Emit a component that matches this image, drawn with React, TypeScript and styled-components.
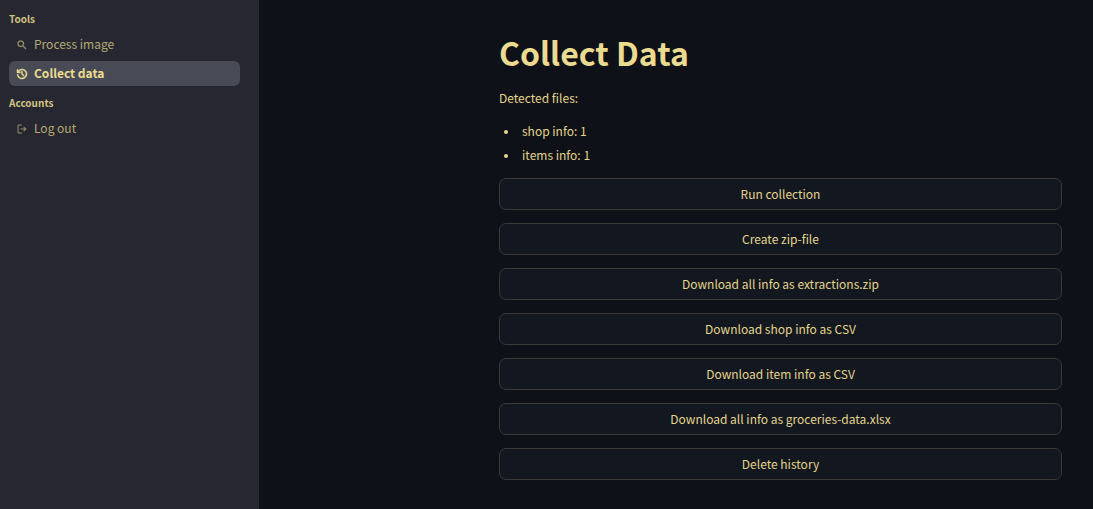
import React from "react";
import styled, { createGlobalStyle } from "styled-components";

const GlobalStyle = createGlobalStyle`
  *, *::before, *::after { box-sizing: border-box; }
  body {
    margin: 0;
    background: #0e1117;
    color: #e5d58c;
    font-family: "Source Sans Pro", "Noto Sans CJK SC", sans-serif;
    font-size: 12px;
    line-height: 24px;
  }
`;

const Shell = styled.div`
  display: flex;
  min-height: 100vh;
`;

const Sidebar = styled.nav`
  flex: 0 0 259px;
  padding: 9px 19px 9px 9px;
  background: #262730;
`;

const SectionTitle = styled.h2`
  margin: 0;
  font-size: 10px;
  line-height: 20px;
  font-weight: 700;
  color: #cfc283;
`;

const NavList = styled.ul`
  display: grid;
  gap: 4px;
  margin: 3px 0 7px;
  padding: 0;
  list-style: none;
`;

const NavLink = styled.a<{ $active?: boolean }>`
  display: flex;
  align-items: center;
  gap: 6px;
  height: 25px;
  padding: 0 7px 2px;
  border-radius: 6px;
  text-decoration: none;
  color: ${(p) => (p.$active ? "#eddd90" : "#b5aa76")};
  background: ${(p) => (p.$active ? "#484a55" : "transparent")};
  font-weight: ${(p) => (p.$active ? 600 : 400)};
`;

const Icon = styled.svg<{ $dim?: boolean }>`
  width: 12px;
  height: 12px;
  margin-top: 2px;
  fill: currentColor;
  stroke: currentColor;
  opacity: ${(p) => (p.$dim ? 0.8 : 1)};
`;

const Main = styled.main`
  flex: 1;
  min-width: 0;
  padding: 28px 31px 30px 240px;
`;

const Title = styled.h1`
  margin: 0 0 10px;
  font-size: 32px;
  line-height: 48px;
  font-weight: 700;
  color: #ebdb90;
`;

const Paragraph = styled.p`
  margin: 0 0 9px;
`;

const FileList = styled.ul`
  margin: 0 0 11px;
  padding: 0 0 0 20px;

  li {
    padding-left: 3px;
  }

  li::marker {
    font-size: 11px;
  }
`;

const Actions = styled.div`
  display: grid;
  gap: 13px;
`;

const ActionButton = styled.button`
  height: 32px;
  padding: 0 10px;
  border: 1px solid #3b3a35;
  border-radius: 7px;
  background: #131720;
  color: inherit;
  font: inherit;
  cursor: pointer;
`;

const SearchIcon = () => (
  <Icon $dim viewBox="0 0 24 24" strokeWidth="0.6" aria-hidden="true">
    <path d="M15.5 14h-.79l-.28-.27A6.47 6.47 0 0 0 16 9.5 6.5 6.5 0 1 0 9.5 16c1.61 0 3.09-.59 4.23-1.57l.27.28v.79l5 4.99L20.49 19l-4.99-5zm-6 0C7.01 14 5 11.99 5 9.5S7.01 5 9.5 5 14 7.01 14 9.5 11.99 14 9.5 14z" />
  </Icon>
);

const HistoryIcon = () => (
  <Icon viewBox="50 -910 860 860" strokeWidth="30" aria-hidden="true">
    <path d="M480-120q-138 0-240.500-91.500T122-440h82q14 104 92.500 172T480-200q117 0 198.500-81.500T760-480q0-117-81.500-198.500T480-760q-69 0-129 32t-101 88h110v80H120v-240h80v94q51-64 124.500-99T480-840q75 0 140.500 28.500t114 77q48.500 48.500 77 114T840-480q0 75-28.500 140.500t-77 114q-48.500 48.500-114 77T480-120Zm112-192L440-464v-216h80v184l128 128-56 56Z" />
  </Icon>
);

const LogoutIcon = () => (
  <Icon $dim viewBox="0 -960 960 960" strokeWidth="0" aria-hidden="true">
    <path d="M200-120q-33 0-56.500-23.500T120-200v-560q0-33 23.500-56.500T200-840h280v80H200v560h280v80H200Zm440-160-55-58 102-102H360v-80h327L585-622l55-58 200 200-200 200Z" />
  </Icon>
);

const actions = [
  "Run collection",
  "Create zip-file",
  "Download all info as extractions.zip",
  "Download shop info as CSV",
  "Download item info as CSV",
  "Download all info as groceries-data.xlsx",
  "Delete history",
];

export default function App() {
  return (
    <Shell>
      <GlobalStyle />
      <Sidebar>
        <SectionTitle>Tools</SectionTitle>
        <NavList>
          <li><NavLink href="#process"><SearchIcon />Process image</NavLink></li>
          <li><NavLink href="#collect" $active aria-current="page"><HistoryIcon />Collect data</NavLink></li>
        </NavList>
        <SectionTitle>Accounts</SectionTitle>
        <NavList>
          <li><NavLink href="#logout"><LogoutIcon />Log out</NavLink></li>
        </NavList>
      </Sidebar>
      <Main>
        <Title>Collect Data</Title>
        <Paragraph>Detected files:</Paragraph>
        <FileList>
          <li>shop info: 1</li>
          <li>items info: 1</li>
        </FileList>
        <Actions>
          {actions.map((label) => (
            <ActionButton key={label} type="button">{label}</ActionButton>
          ))}
        </Actions>
      </Main>
    </Shell>
  );
}
